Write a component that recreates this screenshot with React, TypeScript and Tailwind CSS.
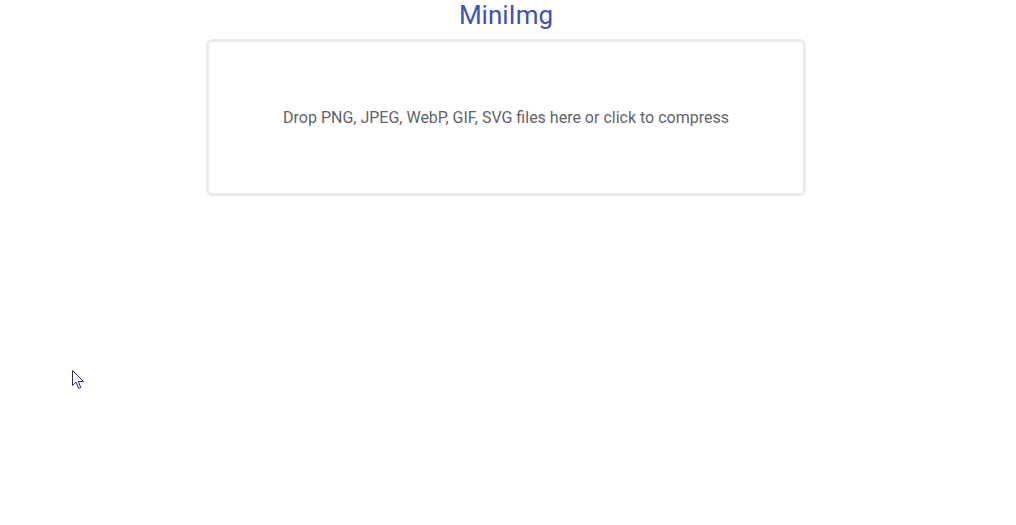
import React from "react";

export default function App() {
  return (
    <div
      className="relative min-h-[525px] w-full bg-white"
      style={{ fontFamily: "Roboto, 'Noto Sans', sans-serif" }}
    >
      <div className="flex flex-col items-center pr-1">
        <h1 className="m-0 text-[26px] font-normal leading-[30px] text-[#3f51b5]">
          MiniImg
        </h1>
        <div className="mt-[9px] flex h-[157px] w-[600px] cursor-pointer items-center justify-center rounded-[6px] border-[3px] border-[#ebebeb] bg-white">
          <p className="text-[16px] text-[#5f6368]">
            Drop PNG, JPEG, WebP, GIF, SVG files here or click to compress
          </p>
        </div>
      </div>
      <svg
        className="absolute left-[72px] top-[370px]"
        width="13"
        height="20"
        viewBox="0 0 13 20"
      >
        <path
          d="M0.5 0.5 L0.5 15.5 L4 12.2 L6.6 18.4 L8.8 17.5 L6.3 11.5 L11.5 11.5 Z"
          fill="white"
          stroke="#2a2a6e"
          strokeWidth="1"
          strokeLinejoin="round"
        />
      </svg>
    </div>
  );
}
